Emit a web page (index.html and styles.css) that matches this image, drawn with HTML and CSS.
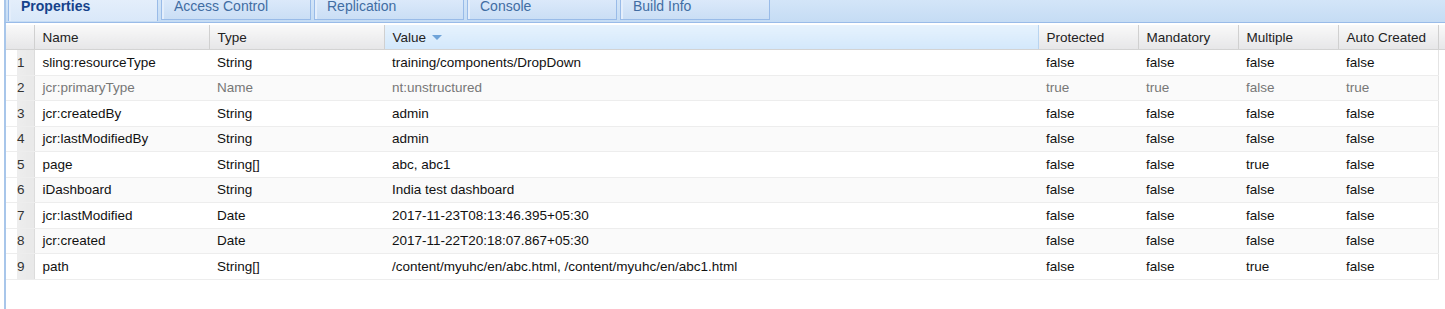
FILE: index.html
```html
<!DOCTYPE html>
<html lang="en">
<head>
  <meta charset="UTF-8">
  <title>Properties</title>
  <link rel="stylesheet" href="styles.css">
</head>
<body>
  <!-- Tabs -->
  <div class="tabstrip">
    <div class="tab active">Properties</div>
    <div class="tab">Access Control</div>
    <div class="tab">Replication</div>
    <div class="tab">Console</div>
    <div class="tab">Build Info</div>
  </div>

  <!-- Property grid -->
  <div class="panel">
    <table class="grid">
      <colgroup>
        <col class="c-num">
        <col class="c-name">
        <col class="c-type">
        <col class="c-value">
        <col class="c-flag">
        <col class="c-flag">
        <col class="c-flag">
        <col class="c-flag">
        <col class="c-end">
      </colgroup>
      <thead>
        <tr>
          <th class="num"></th>
          <th>Name</th>
          <th>Type</th>
          <th class="sorted">Value <span class="arrow"></span></th>
          <th>Protected</th>
          <th>Mandatory</th>
          <th>Multiple</th>
          <th>Auto Created</th>
          <th class="end"></th>
        </tr>
      </thead>
      <tbody>
        <tr>
          <td class="num">1</td><td>sling:resourceType</td><td>String</td><td>training/components/DropDown</td>
          <td>false</td><td>false</td><td>false</td><td>false</td><td class="end"></td>
        </tr>
        <tr class="alt protected">
          <td class="num">2</td><td>jcr:primaryType</td><td>Name</td><td>nt:unstructured</td>
          <td>true</td><td>true</td><td>false</td><td>true</td><td class="end"></td>
        </tr>
        <tr>
          <td class="num">3</td><td>jcr:createdBy</td><td>String</td><td>admin</td>
          <td>false</td><td>false</td><td>false</td><td>false</td><td class="end"></td>
        </tr>
        <tr class="alt">
          <td class="num">4</td><td>jcr:lastModifiedBy</td><td>String</td><td>admin</td>
          <td>false</td><td>false</td><td>false</td><td>false</td><td class="end"></td>
        </tr>
        <tr>
          <td class="num">5</td><td>page</td><td>String[]</td><td>abc, abc1</td>
          <td>false</td><td>false</td><td>true</td><td>false</td><td class="end"></td>
        </tr>
        <tr class="alt">
          <td class="num">6</td><td>iDashboard</td><td>String</td><td>India test dashboard</td>
          <td>false</td><td>false</td><td>false</td><td>false</td><td class="end"></td>
        </tr>
        <tr>
          <td class="num">7</td><td>jcr:lastModified</td><td>Date</td><td>2017-11-23T08:13:46.395+05:30</td>
          <td>false</td><td>false</td><td>false</td><td>false</td><td class="end"></td>
        </tr>
        <tr class="alt">
          <td class="num">8</td><td>jcr:created</td><td>Date</td><td>2017-11-22T20:18:07.867+05:30</td>
          <td>false</td><td>false</td><td>false</td><td>false</td><td class="end"></td>
        </tr>
        <tr>
          <td class="num">9</td><td>path</td><td>String[]</td><td>/content/myuhc/en/abc.html, /content/myuhc/en/abc1.html</td>
          <td>false</td><td>false</td><td>true</td><td>false</td><td class="end"></td>
        </tr>
      </tbody>
    </table>
  </div>
</body>
</html>
```

FILE: styles.css
```css
/* General */
body {
  margin: 0;
  font-family: "Liberation Sans", Arial, sans-serif;
  font-size: 13.5px;
  color: #111;
  background: #fff;
  height: 309px;
  overflow: hidden;
}

/* Tab strip */
.tabstrip {
  display: flex;
  gap: 3px;
  height: 20px;
  margin-left: 4px;
  padding: 0 0 2px 2px;
  background: linear-gradient(#d3e5f8, #c5dcf4);
  border-bottom: 1px solid #99bbe8;
  border-left: 2px solid #a8c6ea;
}

.tab {
  width: 150px;
  height: 20px;
  box-sizing: border-box;
  padding-left: 12px;
  font-size: 14px;
  line-height: 13px;
  color: #416da3;
  background: linear-gradient(#dbe9fa, #cadef5);
  border: 1px solid #99bbe8;
  border-top: none;
  box-shadow: inset 2px 0 0 #e4eefb;
}

.tab.active {
  color: #15428b;
  font-weight: bold;
  background: linear-gradient(#e4eefb, #d9e8f9);
  border-bottom: none;
  height: 21px;
  margin-bottom: -1px;
}

/* Grid */
.panel {
  margin-left: 4px;
  border-left: 2px solid #a8c6ea;
  padding-top: 2px;
  height: 287px;
}

.grid {
  border-collapse: collapse;
  table-layout: fixed;
  width: 1439px;
}

.c-num { width: 28px; }
.c-name { width: 175px; }
.c-type { width: 175px; }
.c-value { width: 654px; }
.c-flag { width: 100px; }
.c-end { width: 7px; }

.grid th {
  height: 24px;
  padding: 0 0 0 8px;
  text-align: left;
  font-weight: normal;
  color: #222;
  white-space: nowrap;
  background: linear-gradient(#f9f9f9, #e6e6e8);
  border-right: 1px solid #d0d0d0;
  border-bottom: 1px solid #d3d3d3;
}

.grid th.sorted {
  background: linear-gradient(#e6f2fd, #d3e8fb);
  border-right-color: #b8d4f0;
}

.grid th.end {
  border-right: none;
}

.arrow {
  display: inline-block;
  width: 0;
  height: 0;
  margin-left: 2px;
  vertical-align: middle;
  border-left: 5px solid transparent;
  border-right: 5px solid transparent;
  border-top: 5px solid #6fa3d8;
}

.grid td {
  height: 24.5px;
  padding: 0 0 0 8px;
  white-space: nowrap;
  border-bottom: 1px solid #ededed;
  color: #111;
}

.grid tr.alt td {
  background: #fafafa;
}

.grid tr.protected td {
  color: #777;
}

.grid td.num,
.grid tr.alt td.num {
  padding: 0 9px 0 0;
  text-align: right;
  color: #333;
  background: linear-gradient(to right, #fff 0, #fff 38%, #ededed 40%, #e8e8e8 100%);
  border-right: 1px solid #dcdcdc;
}

.grid th.num {
  padding: 0;
}

.grid td.end,
.grid tr.alt td.end {
  padding: 0;
  background: #fff;
  border-left: 1px solid #e4e4e4;
  border-bottom: none;
}
```
